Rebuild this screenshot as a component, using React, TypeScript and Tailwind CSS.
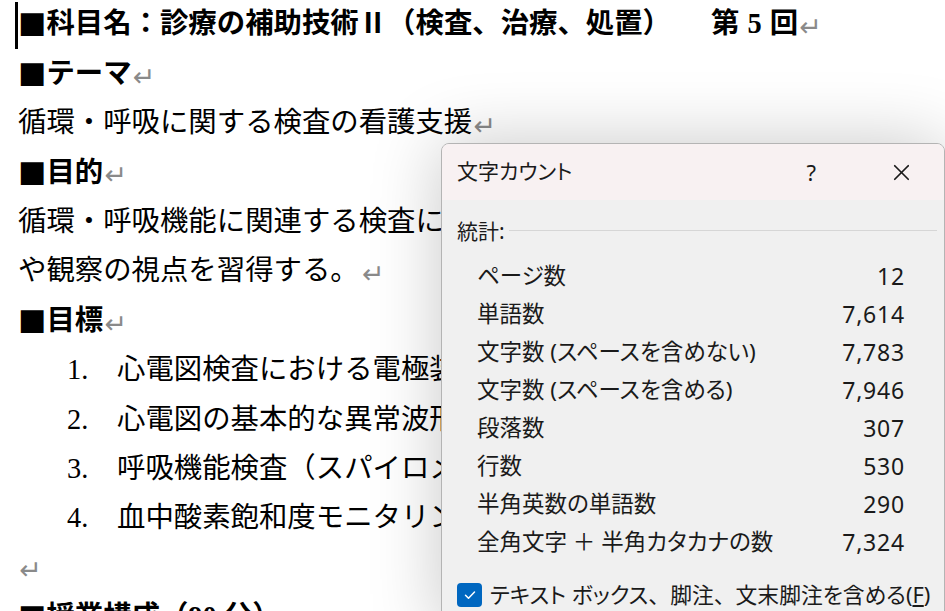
import { X } from 'lucide-react';

const docFont = { fontFamily: '"Liberation Serif", "Noto Sans CJK JP", serif' };
const cjkFont = { fontFamily: '"Noto Sans CJK JP", sans-serif' };
const uiFont = { fontFamily: '"Noto Sans", "Noto Sans CJK JP", sans-serif' };

function Mark() {
  return (
    <span
      className="ml-[1px] mt-[4px] text-[27px] font-normal leading-none text-[#8a8a8a]"
      style={{ fontFamily: '"DejaVu Sans", sans-serif' }}
    >
      ↵
    </span>
  );
}

function Sq() {
  return <span style={cjkFont}>■</span>;
}

function Line({ children, bold }: { children: React.ReactNode; bold?: boolean }) {
  return (
    <div className={`flex h-[49.4px] items-center whitespace-nowrap ${bold ? 'font-bold' : ''}`}>
      {children}
    </div>
  );
}

function ListItem({ n, text }: { n: number; text: string }) {
  return (
    <Line>
      <span className="ml-[49px] w-[50px]">{n}.</span>
      <span>{text}</span>
      <Mark />
    </Line>
  );
}

// full-width comma, kept at its normal width inside the palt dialog
function Comma() {
  return <span className="[font-feature-settings:normal]">、</span>;
}

const stats: [string, string][] = [
  ['ページ数', '12'],
  ['単語数', '7,614'],
  ['文字数 (スペースを含めない)', '7,783'],
  ['文字数 (スペースを含める)', '7,946'],
  ['段落数', '307'],
  ['行数', '530'],
  ['半角英数の単語数', '290'],
  ['全角文字 ＋ 半角カタカナの数', '7,324'],
];

function WordCountDialog() {
  return (
    <div
      className="absolute left-[441px] top-[143px] h-[490px] w-[504px] overflow-hidden rounded-t-[8px] border border-[#b4b4b4] bg-[#f0f0f0] text-[#1a1a1a] shadow-[0_0_70px_rgba(0,0,0,0.22)] [font-feature-settings:'palt']"
      style={uiFont}
    >
      <div className="flex h-[56px] items-center bg-[#f8f1f2] pl-[15px]">
        <span className="text-[21px]">文字カウント</span>
        <span className="ml-auto text-[22px]">?</span>
        <span className="ml-[72px] mr-[29px] flex items-center">
          <X size={27} strokeWidth={1.5} className="text-[#1a1a1a]" />
        </span>
      </div>
      <div className="pl-[15px] pt-[20px]">
        <div className="flex h-[24px] items-center gap-[4px] text-[21px]">
          <span>統計:</span>
          <div className="mr-[7px] mt-[-4px] h-px flex-1 bg-[#d6d6d6]" />
        </div>
        <div className="mt-[13px] pl-[20px] pr-[39px] text-[22.5px]">
          {stats.map(([label, value]) => (
            <div key={label} className="flex h-[38px] items-center justify-between whitespace-nowrap">
              <span>{label}</span>
              <span className="text-[23px] tracking-[0.8px]">{value}</span>
            </div>
          ))}
        </div>
        <div className="mt-[18px] flex items-center gap-[8px] whitespace-nowrap text-[21.8px]">
          <div className="flex h-[24px] w-[25px] shrink-0 items-center justify-center rounded-[4px] bg-[#0067c0]">
            <svg width="14" height="14" viewBox="0 0 14 14" fill="none">
              <path d="M2.5 7.2l3 3 6-6.2" stroke="#fff" strokeWidth="1.5" strokeLinecap="round" strokeLinejoin="round" />
            </svg>
          </div>
          <span>
            テキスト ボックス<Comma />脚注<Comma />文末脚注を含める(<span className="underline underline-offset-2">F</span>)
          </span>
        </div>
      </div>
    </div>
  );
}

export default function App() {
  return (
    <div className="relative h-[611px] w-[945px] overflow-hidden bg-white text-black">
      <div className="absolute left-[15px] top-[2px] h-[47px] w-[3px] bg-black" />
      <div className="pl-[18px] text-[28.4px]" style={docFont}>
        <Line bold>
          <Sq />
          科目名：診療の補助技術Ⅱ（検査、治療、処置）
          <span className="ml-[40px]">第</span>
          <span className="mx-[8px]">5</span>
          <span>回</span>
          <Mark />
        </Line>
        <Line bold>
          <Sq />
          テーマ<Mark />
        </Line>
        <Line>
          循環・呼吸に関する検査の看護支援<Mark />
        </Line>
        <Line bold>
          <Sq />
          目的<Mark />
        </Line>
        <Line>循環・呼吸機能に関連する検査における看護師の役割を理解し、安全な介助</Line>
        <Line>
          や観察の視点を習得する。<span className="w-[2px]" />
          <Mark />
        </Line>
        <Line bold>
          <Sq />
          目標<Mark />
        </Line>
        <ListItem n={1} text="心電図検査における電極装着の手順と留意点を説明できる。" />
        <ListItem n={2} text="心電図の基本的な異常波形を説明できる。" />
        <ListItem n={3} text="呼吸機能検査（スパイロメトリー）の看護を説明できる。" />
        <ListItem n={4} text="血中酸素飽和度モニタリングの留意点を説明できる。" />
        <Line>
          <Mark />
        </Line>
        <Line bold>
          <Sq />
          授業構成（90 分）
        </Line>
      </div>
      <WordCountDialog />
    </div>
  );
}
